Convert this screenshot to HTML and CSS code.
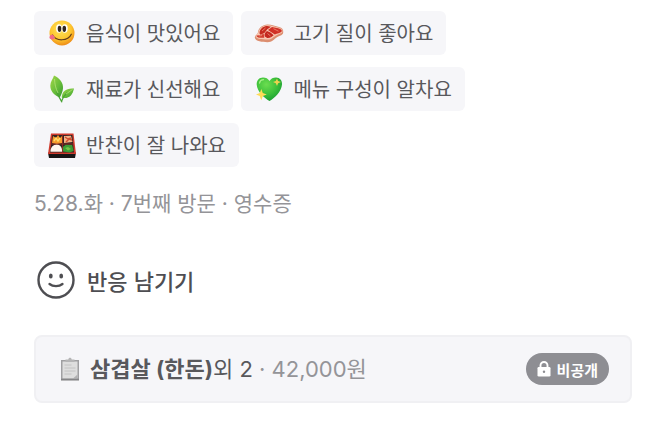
FILE: index.html
```html
<!DOCTYPE html>
<html lang="ko">
<head>
  <meta charset="UTF-8">
  <meta name="viewport" content="width=device-width, initial-scale=1.0">
  <title>방문 리뷰</title>
  <link rel="stylesheet" href="styles.css">
</head>
<body>
  <main class="review">
    <ul class="tags">
      <li class="tag">
        <svg class="tag-icon" viewBox="0 0 30 30" aria-hidden="true">
          <defs>
            <radialGradient id="face" cx="45%" cy="35%" r="65%">
              <stop offset="0" stop-color="#ffe65c"/>
              <stop offset=".65" stop-color="#fdc52f"/>
              <stop offset="1" stop-color="#ee8c18"/>
            </radialGradient>
          </defs>
          <circle cx="15" cy="15" r="12.5" fill="url(#face)"/>
          <ellipse cx="12" cy="10.5" rx="2.9" ry="4.2" fill="#fff"/>
          <ellipse cx="17.8" cy="10.5" rx="2.9" ry="4.2" fill="#fff"/>
          <ellipse cx="12.5" cy="10.8" rx="1.8" ry="3.1" fill="#30251e"/>
          <ellipse cx="17.3" cy="10.8" rx="1.8" ry="3.1" fill="#30251e"/>
          <path d="M5.500 17c3.500 6.500 15.500 6.500 18.800-.8" fill="none" stroke="#643e1b" stroke-width="1.200" stroke-linecap="round"/>
          <path d="M5.800 16.500c-3 .2-4.300 2.900-2.700 4.300 1.800 1.500 4.300.4 4.800-1.600z" fill="#f16b86"/>
        </svg>
        음식이 맛있어요
      </li>
      <li class="tag">
        <svg class="tag-icon" viewBox="0 0 30 30" aria-hidden="true">
          <path d="M.8 19.500c0-2 2.800-3 3.200-5.200.4-4 4.600-7.700 9.500-7.700 4.400 0 8 1.700 11.500 2.400 3.200.7 4.700 3 4.200 5.700-.4 2.600-3.800 3-6.200 4.500-3 2-5.200 5.200-9.800 5C9 24 1 23.600.8 19.500z" fill="#dc8e70"/>
          <path d="M1.500 17.500c1-1.200 2.500-1.700 3-3.500.8-3.800 4.500-6.800 9-6.800 4.300 0 7.500 1.800 11.200 2.500 2.800.6 4.200 2.200 3.600 4.200-.6 1.700-3.700 2-6.300 3.500-3 1.800-4.700 4.300-8.600 4.100C8.600 21.300 1.300 21.500 1.500 17.500z" fill="#f8c7b2"/>
          <path d="M5.700 13.500c.7-3.200 4-5.600 7.600-5.600l3.700.8-3.700 2.500-2.900 3.800-4 1.700c-1-.8-1-2-.7-3.200z" fill="#c62c20"/>
          <path d="M18 8.900l6.200 1.400c3 .8 4.300 2.300 3.300 3.400-1.200 1.300-4.500 1.500-6.700 2.900l-4.200-2.900-2.600-1.600z" fill="#d13126"/>
          <path d="M13 13l3.500 1.400 3.200 2.900c-2 1.500-3.500 3-6.500 2.800l-2.400-1.600c-.8-1.900.1-4.100 2.200-5.500z" fill="#c4281f"/>
          <path d="M2.300 17.500l3.800-.2 3.600-1.500.6 4c-4 .2-7.500 0-8-2.300z" fill="#d13e2e"/>
          <path d="M8 13l3.500-3m8 .7l5 2.500m-11 2.300l3 2.500M5 18l3-.5" stroke="#ec8b75" stroke-width=".8" fill="none"/>
        </svg>
        고기 질이 좋아요
      </li>
      <li class="tag">
        <svg class="tag-icon" viewBox="0 0 30 30" aria-hidden="true">
          <defs>
            <linearGradient id="leaf" x1="0" y1="0" x2="1" y2="1">
              <stop offset="0" stop-color="#a2d748"/>
              <stop offset=".55" stop-color="#68bd3b"/>
              <stop offset="1" stop-color="#36992f"/>
            </linearGradient>
          </defs>
          <path d="M7 1.500c5.500 2.700 9.500 7 9 12.700-.2 3.300-1.800 6.500-3.200 9.300C6.500 21 3.200 16.500 3.300 11.500c.1-3.700 2.700-6.800 3.700-10z" fill="url(#leaf)"/>
          <path d="M27 14.500c-1.500 6.500-4.700 10.700-12.200 9.300-.3-6.600 4.700-10.100 12.200-9.300z" fill="url(#leaf)"/>
          <path d="M10 18c1.200 3.500 2.700 6.500 4.800 9.800M20 19c-2.700 2.200-4.500 4.700-5.500 8.300" fill="none" stroke="#4aa335" stroke-width="1.300" stroke-linecap="round"/>
          <path d="M7.500 5c.2 5 1.200 9.500 3.500 14M25.500 15.500L19 20" fill="none" stroke="#bce580" stroke-width=".7"/>
        </svg>
        재료가 신선해요
      </li>
      <li class="tag">
        <svg class="tag-icon" viewBox="0 0 30 30" aria-hidden="true">
          <defs>
            <radialGradient id="heart" cx="38%" cy="30%" r="75%">
              <stop offset="0" stop-color="#6cdd50"/>
              <stop offset=".55" stop-color="#3cc03b"/>
              <stop offset="1" stop-color="#169b31"/>
            </radialGradient>
          </defs>
          <path d="M15.500 27C10 23.800 3 17.500 2.700 10.500 2.500 6.300 5.200 3.500 9 3.500c2.900 0 5 1.200 6.500 3.400 1.400-2.200 3.600-3.400 6.500-3.400 3.800 0 6.300 3 6 7C27.400 17.500 21 23.800 15.500 27z" fill="url(#heart)"/>
          <path d="M5.500 9c.4-2 1.800-3.200 4-3.300" fill="none" stroke="#a6ef86" stroke-width="1.300" stroke-linecap="round"/>
          <path d="M23 4.500l1 2.500 3 1-2.900 1.200-1.100 2.900-1.200-2.900L19 8l2.800-1z" fill="#edd24f"/>
          <path d="M7.300 15l1.500 4 4 1.400-3.900 1.700-1.600 4.200-1.600-4.200L2 20.500l3.800-1.500z" fill="#ffdc58"/>
        </svg>
        메뉴 구성이 알차요
      </li>
      <li class="tag">
        <svg class="tag-icon" viewBox="0 0 30 30" aria-hidden="true">
          <path d="M1 22.500h28L28 28H2z" fill="#181515"/>
          <path d="M4 3.500h22.500L29 24H1z" fill="#cf3a2c"/>
          <path d="M5.300 5h20L27 22.500H3z" fill="#332322"/>
          <path d="M5 13l1-7 3 2 2-3 2 3 2-2v7l-5 1z" fill="#f79b2b"/>
          <path d="M7 11l2-3 2 3 2-3" fill="none" stroke="#ffdc69" stroke-width="1.400"/>
          <path d="M17 6l7-.3 1.500 6.300L17 13z" fill="#f1b188"/>
          <path d="M18 7l3 2 3-1m-5 4l3-3 3 1" fill="none" stroke="#d04f31" stroke-width="1.500"/>
          <path d="M3.500 21.800c-.4-4 2.700-7.200 6.300-7.200 3.300 0 5.500 2.900 5.300 7.200z" fill="#fff6ee"/>
          <path d="M15.800 17l3-2.300 6.300.3 1.500 6-4 1.500-6.500-1z" fill="#3a9d36"/>
          <path d="M18 18l3-1 3 2-3 1.500z" fill="#73c346"/>
          <path d="M15.500 4.500V23M3.500 14h23" stroke="#a62b22" stroke-width=".7"/>
        </svg>
        반찬이 잘 나와요
      </li>
    </ul>

    <p class="visit-info">5.28.화 · 7번째 방문 · 영수증</p>

    <button class="reaction" type="button">
      <svg class="reaction-icon" viewBox="0 0 40 40" aria-hidden="true">
        <circle cx="20" cy="20" r="17.500" fill="none" stroke="#4e4e52" stroke-width="2.400"/>
        <ellipse cx="14.800" cy="16" rx="1.900" ry="2.500" fill="#4e4e52"/>
        <ellipse cx="25.200" cy="16" rx="1.900" ry="2.500" fill="#4e4e52"/>
        <path d="M13.500 24c3.500 2.900 9.500 2.900 13 0" fill="none" stroke="#4e4e52" stroke-width="2.300" stroke-linecap="round"/>
      </svg>
      반응 남기기
    </button>

    <section class="receipt">
      <svg class="receipt-icon" viewBox="0 0 20 24" aria-hidden="true">
        <path d="M1 3h18v20.500H1z" fill="#a0a0a2"/>
        <path d="M2.500 4.500h15v17h-15z" fill="#dedede"/>
        <path d="M5.500 5V2.500h2.800C8.500 0 11.500 0 11.700 2.500h2.800V5z" fill="#b5b5b6"/>
        <path d="M4.500 8h7m-7 3h11m-11 3h11m-11 3h7" stroke="#bcbcbd" stroke-width=".8"/>
        <path d="M13 21.500l4.500-4v4z" fill="#b2b2b3"/>
        <path d="M1 22.500h18" stroke="#858587" stroke-width="1.500"/>
      </svg>
      <p class="receipt-text"><strong>삼겹살 (한돈)</strong>외 2 <span class="price">· 42,000원</span></p>
      <span class="badge">
        <svg class="lock-icon" viewBox="0 0 14 16" aria-hidden="true">
          <path d="M3.500 7V4.500a3.500 3.500 0 0 1 7 0V7" fill="none" stroke="#fff" stroke-width="1.900"/>
          <rect x=".5" y="6" width="13" height="9.500" rx="1.300" fill="#fff"/>
          <circle cx="7" cy="10.700" r="1.200" fill="#8e8e93"/>
        </svg>
        비공개
      </span>
    </section>
  </main>
</body>
</html>
```
FILE: styles.css
```css
* {
  box-sizing: border-box;
}
body {
  margin: 0;
  background-color: #fff;
  color: #58585c;
  font-family: "Noto Sans CJK KR", sans-serif;
}
.review {
  padding: 11px 34px 20px;
}
.tags {
  display: flex;
  flex-wrap: wrap;
  gap: 12px 8px;
  margin: 0;
  padding: 0;
  list-style: none;
}
.tag {
  display: flex;
  align-items: center;
  gap: 9px;
  height: 44px;
  padding: 0 13px;
  border-radius: 6px;
  background-color: #f6f6f9;
  font-size: 20px;
  line-height: 28px;
}
.tag-icon {
  width: 30px;
  height: 30px;
}
.visit-info {
  margin: 21px 0 40px;
  color: #949498;
  font-family: Inter, "Noto Sans CJK KR", sans-serif;
  font-size: 21px;
  line-height: 32px;
}
.reaction {
  display: flex;
  align-items: center;
  gap: 11px;
  padding: 0 2px;
  border: 0;
  background: none;
  color: #4e4e52;
  font-family: inherit;
  font-size: 22px;
  font-weight: 500;
  line-height: 40px;
  cursor: pointer;
}
.reaction-icon {
  width: 40px;
  height: 40px;
}
.receipt {
  display: flex;
  align-items: center;
  height: 68px;
  margin-top: 35px;
  padding: 0 21px 0 24px;
  border: 2px solid #f0f0f3;
  border-radius: 8px;
  background-color: #f6f6f9;
}
.receipt-icon {
  width: 20px;
  height: 24px;
  margin-right: 10px;
}
.receipt-text {
  flex: 1;
  margin: 0;
  font-family: Inter, "Noto Sans CJK KR", sans-serif;
  font-size: 22px;
  line-height: 32px;
}
.receipt-text strong {
  font-weight: 700;
}
.price {
  color: #949498;
}
.badge {
  display: flex;
  align-items: center;
  gap: 6px;
  height: 32px;
  padding: 0 11px;
  border-radius: 16px;
  background-color: #8e8e93;
  color: #fff;
  font-size: 15px;
  font-weight: 700;
}
.lock-icon {
  width: 14px;
  height: 16px;
}
```
